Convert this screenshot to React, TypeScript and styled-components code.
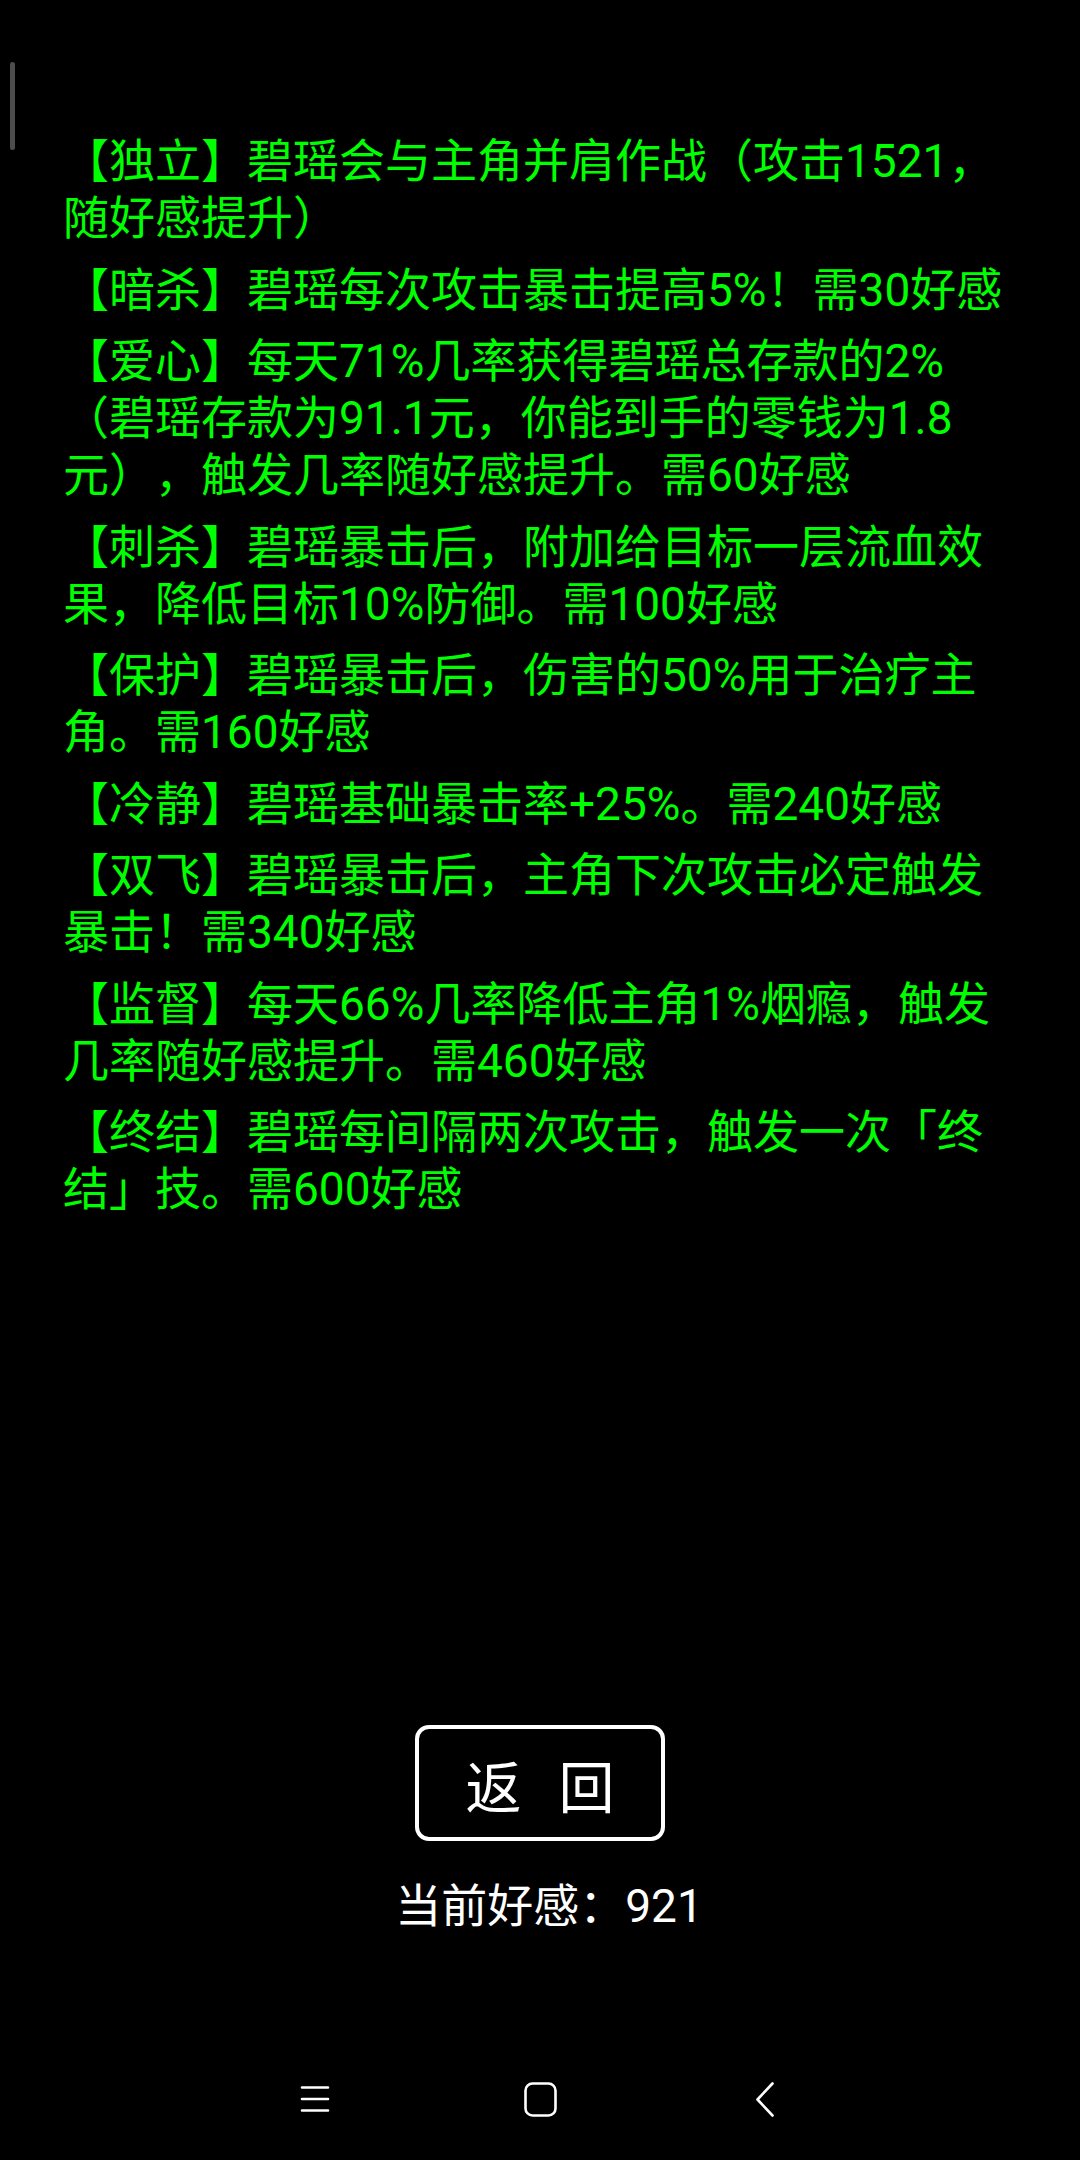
import React from 'react';
import styled, { createGlobalStyle } from 'styled-components';

const green = '#00ff00';
const textFont = `Roboto, "Noto Sans CJK SC", sans-serif`;

const skills = [
    '【独立】碧瑶会与主角并肩作战（攻击1521，随好感提升）',
    '【暗杀】碧瑶每次攻击暴击提高5%！需30好感',
    '【爱心】每天71%几率获得碧瑶总存款的2%（碧瑶存款为91.1元，你能到手的零钱为1.8元），触发几率随好感提升。需60好感',
    '【刺杀】碧瑶暴击后，附加给目标一层流血效果，降低目标10%防御。需100好感',
    '【保护】碧瑶暴击后，伤害的50%用于治疗主角。需160好感',
    '【冷静】碧瑶基础暴击率+25%。需240好感',
    '【双飞】碧瑶暴击后，主角下次攻击必定触发暴击！需340好感',
    '【监督】每天66%几率降低主角1%烟瘾，触发几率随好感提升。需460好感',
    '【终结】碧瑶每间隔两次攻击，触发一次「终结」技。需600好感',
];

const GlobalStyle = createGlobalStyle`
    html, body {
        margin: 0;
        padding: 0;
        background: #000;
    }
`;

const App = () => {
    return (
        <>
            <GlobalStyle />
            <Screen lang="zh-CN">
                <ScrollThumb />
                <SkillList>
                    {skills.map((s, i) => (
                        <SkillRow key={i}>{s}</SkillRow>
                    ))}
                </SkillList>
                <Footer>
                    <BackButton>返 回</BackButton>
                    <Affection>当前好感：921</Affection>
                </Footer>
                <NavBar>
                    <NavKey>
                        <svg width="30" height="28" viewBox="0 0 30 28">
                            <path d="M2 2.5h26M2 14h26M2 25.5h26" stroke="#fff" strokeWidth="2.6" strokeLinecap="round" />
                        </svg>
                    </NavKey>
                    <NavKey>
                        <svg width="33" height="35" viewBox="0 0 33 35">
                            <rect x="1.5" y="1.5" width="30" height="32" rx="7" fill="none" stroke="#fff" strokeWidth="2.6" />
                        </svg>
                    </NavKey>
                    <NavKey>
                        <svg width="20" height="35" viewBox="0 0 20 35">
                            <path d="M17.5 1.5L2.5 17.5l15 16" fill="none" stroke="#fff" strokeWidth="2.6" strokeLinecap="round" strokeLinejoin="round" />
                        </svg>
                    </NavKey>
                </NavBar>
            </Screen>
        </>
    );
};

const Screen = styled.div`
    position: relative;
    width: 1080px;
    height: 2160px;
    background: #000;
    display: flex;
    flex-direction: column;
    overflow: hidden;
`;

const ScrollThumb = styled.div`
    position: absolute;
    left: 10px;
    top: 62px;
    width: 5px;
    height: 88px;
    border-radius: 3px;
    background: #4d4d4d;
`;

const SkillList = styled.div`
    display: flex;
    flex-direction: column;
    gap: 14.5px;
    width: 950px;
    padding: 133px 0 0 63px;
`;

const SkillRow = styled.div`
    color: ${green};
    font-family: ${textFont};
    font-size: 46px;
    line-height: 57px;
    text-spacing-trim: space-all;
    word-break: normal;
    line-break: strict;
`;

const Footer = styled.div`
    margin-top: auto;
    display: flex;
    flex-direction: column;
    align-items: center;
`;

const BackButton = styled.button`
    box-sizing: border-box;
    width: 250px;
    height: 116px;
    border: 4px solid #fff;
    border-radius: 14px;
    background: #000;
    color: #fff;
    font-family: ${textFont};
    font-size: 56px;
    word-spacing: 23px;
    white-space: pre;
    padding: 0;
    display: flex;
    align-items: center;
    justify-content: center;
`;

const Affection = styled.div`
    margin-top: 38px;
    color: #fff;
    font-family: ${textFont};
    font-size: 46px;
    line-height: 54px;
    padding-left: 18px;
`;

const NavBar = styled.div`
    height: 122px;
    margin-top: 105px;
    display: flex;
    align-items: center;
    justify-content: center;
`;

const NavKey = styled.div`
    width: 225px;
    display: flex;
    justify-content: center;
    align-items: center;
`;

export default App;
